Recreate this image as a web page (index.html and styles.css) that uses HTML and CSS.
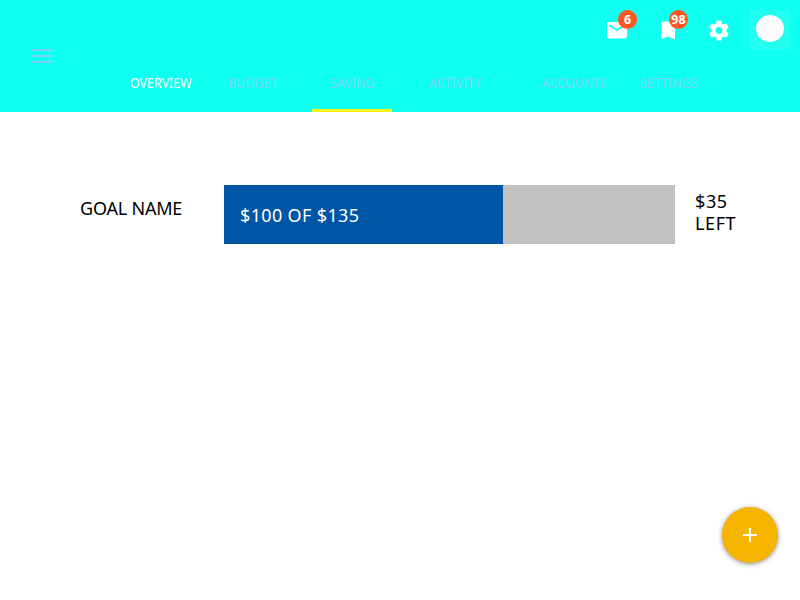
FILE: index.html
```html
<!DOCTYPE html>
<html lang="en">
<head>
<meta charset="utf-8">
<title>Saving</title>
<link rel="stylesheet" href="styles.css">
</head>
<body>
<header class="header">
  <button class="menu" aria-label="Menu"><span></span><span></span><span></span></button>
  <div class="actions">
    <div class="action">
      <svg viewBox="0 0 24 24"><path d="M20 4H4c-1.100 0-1.990.9-1.990 2L2 18.500c0 1.100.9 2 2 2h16c1.100 0 2-.9 2-2V6c0-1.100-.9-2-2-2zm0 4l-8 5-8-5V6l8 5 8-5v2z"/></svg>
      <span class="badge">6</span>
    </div>
    <div class="action">
      <svg viewBox="0 0 24 24"><path d="M17 3.500H7c-1.100 0-2 .9-2 2v16l7-3 7 3v-16c0-1.100-.9-2-2-2z"/></svg>
      <span class="badge">98</span>
    </div>
    <div class="action">
      <svg viewBox="0 0 24 24"><path transform="translate(0 .5)" d="M19.430 12.980c.04-.32.07-.64.07-.98s-.03-.66-.07-.98l2.110-1.650c.19-.15.24-.42.12-.64l-2-3.460c-.12-.22-.39-.3-.61-.22l-2.490 1c-.52-.4-1.080-.73-1.690-.98l-.38-2.650C14.460 2.180 14.250 2 14 2h-4c-.25 0-.46.18-.49.42l-.38 2.650c-.61.25-1.170.59-1.690.98l-2.490-1c-.23-.09-.49 0-.61.22l-2 3.460c-.13.22-.07.49.12.64l2.110 1.650c-.04.32-.07.65-.07.98s.03.66.07.98l-2.110 1.650c-.19.15-.24.42-.12.64l2 3.460c.12.22.39.3.61.22l2.490-1c.52.4 1.080.73 1.690.98l.38 2.650c.03.24.24.42.49.42h4c.25 0 .46-.18.49-.42l.38-2.650c.61-.25 1.170-.59 1.690-.98l2.490 1c.23.09.49 0 .61-.22l2-3.460c.12-.22.07-.49-.12-.64l-2.110-1.650zM12 15.500c-1.930 0-3.500-1.570-3.500-3.500s1.570-3.500 3.500-3.500 3.500 1.570 3.500 3.500-1.570 3.500-3.500 3.500z"/></svg>
    </div>
    <div class="avatar"><span></span></div>
  </div>
  <nav class="tabs">
    <a class="tab tab-light"><span>OVERVIEW</span></a>
    <a class="tab"><span>BUDGET</span></a>
    <a class="tab tab-current"><span>SAVING</span></a>
    <a class="tab"><span>ACTIVITY</span></a>
    <a class="tab"><span>ACCOUNTS</span></a>
    <a class="tab"><span>SETTINGS</span></a>
  </nav>
</header>
<main class="goal">
  <div class="goal-name">GOAL NAME</div>
  <div class="bar"><div class="fill">$100 OF $135</div></div>
  <div class="left"><div class="amount">$35</div><div class="word">LEFT</div></div>
</main>
<button class="fab" aria-label="Add"><svg viewBox="0 0 14 14"><path d="M6 0h2v6h6v2H8v6H6V8H0V6h6z"/></svg></button>
</body>
</html>
```
FILE: styles.css
```css
* { box-sizing: border-box; }
body {
  margin: 0;
  height: 600px;
  overflow: hidden;
  background: #fff;
  color: #000;
  font-family: "Noto Sans", sans-serif;
}
button { border: 0; padding: 0; background: none; }
.header {
  height: 112px;
  background: #0ffff0;
  display: grid;
  grid-template-columns: 130px 1fr;
  grid-template-rows: 60px 52px;
}
.menu {
  grid-row: 1 / 3;
  display: flex;
  flex-direction: column;
  gap: 4px;
  width: 20px;
  margin: 49px 0 0 32px;
  align-self: start;
}
.menu span { height: 2px; width: 20px; background: #7dd3f7; }
.actions {
  display: flex;
  justify-content: flex-end;
  padding: 10px 10px 0 0;
}
.action { position: relative; width: 24px; height: 24px; margin: 8px 27px 0 0; }
.action:nth-child(3) { margin-right: 19px; }
.action svg { display: block; width: 24px; height: 24px; fill: #fff; }
.badge {
  position: absolute;
  left: 13px;
  top: -8px;
  width: 19px;
  height: 19px;
  border-radius: 50%;
  background: #ff5722;
  color: #fff;
  font-size: 12.500px;
  font-weight: 700;
  line-height: 19px;
  text-align: center;
}
.avatar { width: 40px; height: 40px; background: #22fff0; padding: 5px 6px; }
.avatar span { display: block; width: 28px; height: 27px; border-radius: 50%; background: #fcfcfc; }
.tabs {
  display: grid;
  grid-template-columns: 98px 102px 99px 113px 98px 60px;
  font-size: 13.500px;
  color: #74d9f8;
}
.tab { position: relative; padding-top: 13px; line-height: 20px; white-space: nowrap; }
.tab span { display: inline-block; transform: scaleX(.92); transform-origin: left; }
.tab-light { color: #fff; }
.tab-current::after {
  content: "";
  position: absolute;
  left: -18px;
  bottom: 0;
  width: 80px;
  height: 3px;
  background: #fff714;
}
.goal {
  display: grid;
  grid-template-columns: 144px 451px auto;
  padding: 73px 0 0 80px;
  font-size: 18px;
  line-height: 22px;
}
.goal-name { padding-top: 12px; letter-spacing: -.2px; }
.bar { height: 59px; background: #c2c2c2; }
.fill { width: 279px; height: 59px; padding-left: 16px; line-height: 61px; letter-spacing: .35px; background: #0055a5; color: #fff; }
.left { padding: 5px 0 0 20px; letter-spacing: .6px; }
.fab {
  position: absolute;
  left: 722px;
  top: 507px;
  width: 56px;
  height: 56px;
  border-radius: 50%;
  background: #f5b400;
  box-shadow: 0 1px 5px rgba(0,0,0,.45);
  display: grid;
  place-items: center;
}
.fab svg { width: 14px; height: 14px; fill: #fff; }
```
